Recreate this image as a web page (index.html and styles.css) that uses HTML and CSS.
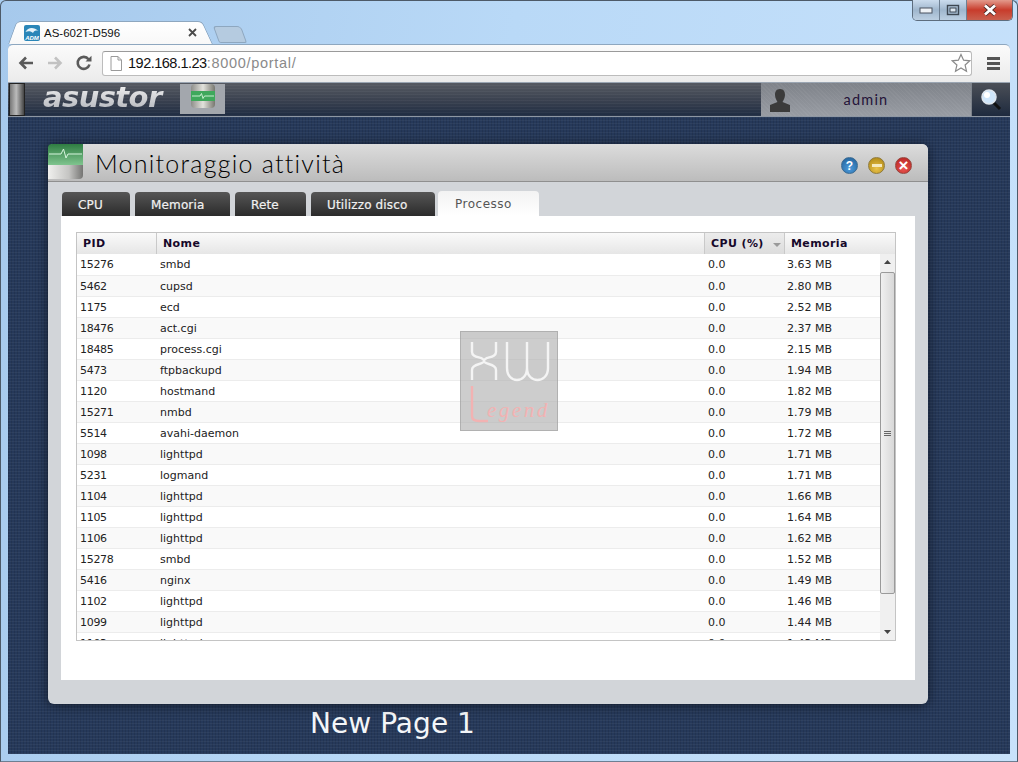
FILE: index.html
```html
<!DOCTYPE html>
<html lang="it">
<head>
<meta charset="utf-8">
<title>AS-602T-D596</title>
<link rel="stylesheet" href="styles.css">
</head>
<body>
<div class="frame">
  <div class="caps">
    <div class="cap cap-min"><svg width="14" height="8" viewBox="0 0 14 8"><rect x="1" y="2" width="12" height="5" fill="#eef2f6" stroke="#4a5360"/></svg></div>
    <div class="cap cap-max"><svg width="14" height="12" viewBox="0 0 14 12"><rect x="1.500" y="1.500" width="11" height="9" fill="none" stroke="#3d4752" stroke-width="1.400"/><rect x="4" y="4" width="6" height="4" fill="#dfe8f1" stroke="#3d4752"/></svg></div>
    <div class="cap cap-close"><svg width="16" height="12" viewBox="0 0 16 12"><path d="M3 1.500 L13 10.500 M13 1.500 L3 10.500" stroke="#4d2a28" stroke-width="4.400"/><path d="M3 1.500 L13 10.500 M13 1.500 L3 10.500" stroke="#fff" stroke-width="2.800"/></svg></div>
  </div>
  <div class="tabstrip">
    <div class="btab">
      <svg class="favicon" width="16" height="16" viewBox="0 0 16 16"><rect width="16" height="16" rx="2" fill="#2a86b8"/><path d="M1.500 7 C4 2 10 2 14.500 6 C11 5 10 6 9 8 C7 6 4 6 1.500 7Z" fill="#e6f3fa"/><text class="fav-text" x="8" y="14.500">ADM</text></svg>
      <span class="btab-title">AS-602T-D596</span>
      <svg class="btab-x" width="9" height="9" viewBox="0 0 9 9"><path d="M1 1 L8 8 M8 1 L1 8" stroke="#4a4a4a" stroke-width="1.800"/></svg>
    </div>
    <div class="newtab"></div>
  </div>
  <div class="toolbar">
    <svg class="tb-ic" width="18" height="16" viewBox="0 0 18 16"><path d="M16 8 H4 M9 2.500 L3.500 8 L9 13.500" fill="none" stroke="#5a5a5a" stroke-width="2.600"/></svg>
    <svg class="tb-ic" width="18" height="16" viewBox="0 0 18 16"><path d="M2 8 H14 M9 2.500 L14.500 8 L9 13.500" fill="none" stroke="#c2c2c2" stroke-width="2.600"/></svg>
    <svg class="tb-ic" width="18" height="16" viewBox="0 0 18 16"><path d="M14.500 9.500 A6 6 0 1 1 13.500 4.200" fill="none" stroke="#5a5a5a" stroke-width="2.600"/><path d="M10.500 6.600 H16.500 V0.800 Z" fill="#5a5a5a"/></svg>
    <div class="omnibox">
      <svg class="page-ic" width="12" height="15" viewBox="0 0 12 15"><path d="M1 .5 H8 L11.500 4 V14.500 H1Z M8 .5 V4 H11.500" fill="#fff" stroke="#9a9a9a"/></svg>
      <span class="url"><span class="url-host">192.168.1.23</span>:8000/portal/</span>
      <svg class="star" width="20" height="20" viewBox="0 0 20 20"><path d="M10 1.500 L12.600 7.200 L18.800 7.800 L14.100 12 L15.500 18.200 L10 15 L4.500 18.200 L5.900 12 L1.200 7.800 L7.400 7.200Z" fill="#fff" stroke="#8a8a8a" stroke-width="1.200"/></svg>
    </div>
    <div class="menu"><span></span><span></span><span></span></div>
  </div>
  <div class="page">
    <header class="appbar">
      <div class="handle"></div>
      <div class="logo">asustor</div>
      <div class="launch">
        <svg width="24" height="24" viewBox="0 0 24 24"><defs><linearGradient id="lg" x1="0" y1="0" x2="1" y2="0"><stop offset="0" stop-color="#8e8e8a"/><stop offset=".5" stop-color="#e2e2dc"/><stop offset="1" stop-color="#77776f"/></linearGradient></defs><rect width="24" height="24" rx="4" fill="url(#lg)"/><rect y="7" width="24" height="10" fill="#3fa85c"/><path d="M1 12 H9 L10.500 9.500 L12 14.500 L13.500 12 H23" stroke="#c8f0d0" fill="none"/></svg>
      </div>
      <div class="user">
        <svg class="avatar" width="24" height="24" viewBox="0 0 24 24"><path d="M12 1 C16 1 17 4 17 7 C17 10 15 13 14.500 14 L22 17 V24 H2 V17 L9.500 14 C9 13 7 10 7 7 C7 4 8 1 12 1Z" fill="#3b3b3b"/></svg>
        <span class="user-name">admin</span>
      </div>
      <div class="search">
        <svg width="22" height="24" viewBox="0 0 22 24"><path d="M13 14 L20 21" stroke="#111" stroke-width="3"/><circle cx="9" cy="9" r="7" fill="#cfe6fb" stroke="#dfe6ee" stroke-width="1.500"/><circle cx="7" cy="7" r="3" fill="#fff"/></svg>
      </div>
    </header>
    <main class="desktop">
      <section class="win">
        <div class="win-head">
          <svg class="win-icon" width="35" height="35" viewBox="0 0 35 35"><defs><linearGradient id="wg" x1="0" y1="0" x2="0" y2="1"><stop offset="0" stop-color="#2f7d42"/><stop offset="1" stop-color="#7fc48e"/></linearGradient><linearGradient id="wb" x1="0" y1="0" x2="1" y2="0"><stop offset="0" stop-color="#f0f0ee"/><stop offset=".6" stop-color="#c4c4c2"/><stop offset="1" stop-color="#757573"/></linearGradient></defs><path d="M0 4 Q0 0 4 0 H35 V21 H0Z" fill="url(#wg)"/><path d="M0 21 H35 V31 Q35 35 31 35 H0Z" fill="url(#wb)"/><path d="M1 10 H13 L15.500 5 L18 14 L20 10 H34" stroke="#d8f5de" fill="none"/></svg>
          <h1 class="win-title">Monitoraggio attività</h1>
          <div class="win-btns">
            <span class="dot dot-help">?</span>
            <span class="dot dot-min"><i class="bar"></i></span>
            <span class="dot dot-close">×</span>
          </div>
        </div>
        <nav class="tabs">
          <a class="tab tab-cpu">CPU</a>
          <a class="tab tab-mem">Memoria</a>
          <a class="tab tab-net">Rete</a>
          <a class="tab tab-disk">Utilizzo disco</a>
          <a class="tab tab-on">Processo</a>
        </nav>
        <div class="panel">
          <div class="grid">
            <div class="grid-head">
              <div class="th th-pid">PID</div>
              <div class="th th-name">Nome</div>
              <div class="th th-cpu">CPU (%)<i class="sort"></i></div>
              <div class="th th-mem">Memoria</div>
            </div>
            <div class="grid-body">
              <table class="rows">
                <tr><td class="c-pid">15276</td><td class="c-name">smbd</td><td class="c-cpu">0.0</td><td class="c-mem">3.63 MB</td></tr>
                <tr><td class="c-pid">5462</td><td class="c-name">cupsd</td><td class="c-cpu">0.0</td><td class="c-mem">2.80 MB</td></tr>
                <tr><td class="c-pid">1175</td><td class="c-name">ecd</td><td class="c-cpu">0.0</td><td class="c-mem">2.52 MB</td></tr>
                <tr><td class="c-pid">18476</td><td class="c-name">act.cgi</td><td class="c-cpu">0.0</td><td class="c-mem">2.37 MB</td></tr>
                <tr><td class="c-pid">18485</td><td class="c-name">process.cgi</td><td class="c-cpu">0.0</td><td class="c-mem">2.15 MB</td></tr>
                <tr><td class="c-pid">5473</td><td class="c-name">ftpbackupd</td><td class="c-cpu">0.0</td><td class="c-mem">1.94 MB</td></tr>
                <tr><td class="c-pid">1120</td><td class="c-name">hostmand</td><td class="c-cpu">0.0</td><td class="c-mem">1.82 MB</td></tr>
                <tr><td class="c-pid">15271</td><td class="c-name">nmbd</td><td class="c-cpu">0.0</td><td class="c-mem">1.79 MB</td></tr>
                <tr><td class="c-pid">5514</td><td class="c-name">avahi-daemon</td><td class="c-cpu">0.0</td><td class="c-mem">1.72 MB</td></tr>
                <tr><td class="c-pid">1098</td><td class="c-name">lighttpd</td><td class="c-cpu">0.0</td><td class="c-mem">1.71 MB</td></tr>
                <tr><td class="c-pid">5231</td><td class="c-name">logmand</td><td class="c-cpu">0.0</td><td class="c-mem">1.71 MB</td></tr>
                <tr><td class="c-pid">1104</td><td class="c-name">lighttpd</td><td class="c-cpu">0.0</td><td class="c-mem">1.66 MB</td></tr>
                <tr><td class="c-pid">1105</td><td class="c-name">lighttpd</td><td class="c-cpu">0.0</td><td class="c-mem">1.64 MB</td></tr>
                <tr><td class="c-pid">1106</td><td class="c-name">lighttpd</td><td class="c-cpu">0.0</td><td class="c-mem">1.62 MB</td></tr>
                <tr><td class="c-pid">15278</td><td class="c-name">smbd</td><td class="c-cpu">0.0</td><td class="c-mem">1.52 MB</td></tr>
                <tr><td class="c-pid">5416</td><td class="c-name">nginx</td><td class="c-cpu">0.0</td><td class="c-mem">1.49 MB</td></tr>
                <tr><td class="c-pid">1102</td><td class="c-name">lighttpd</td><td class="c-cpu">0.0</td><td class="c-mem">1.46 MB</td></tr>
                <tr><td class="c-pid">1099</td><td class="c-name">lighttpd</td><td class="c-cpu">0.0</td><td class="c-mem">1.44 MB</td></tr>
                <tr><td class="c-pid">1103</td><td class="c-name">lighttpd</td><td class="c-cpu">0.0</td><td class="c-mem">1.43 MB</td></tr>
              </table>
              <div class="scroll">
                <svg class="arrow" width="7" height="4" viewBox="0 0 7 4"><path d="M3.500 0 L7 4 H0Z" fill="#444"/></svg>
                <div class="thumb"><i></i><i></i><i></i></div>
                <svg class="arrow arrow-end" width="7" height="4" viewBox="0 0 7 4"><path d="M0 0 H7 L3.500 4Z" fill="#444"/></svg>
              </div>
            </div>
          </div>
        </div>
        <div class="watermark">
          <svg width="98" height="100" viewBox="0 0 98 100">
            <path d="M11 10 V20 C11 27 23 24 23 29 C23 24 35 27 35 20 V10 M11 48 V38 C11 31 23 33 23 29 C23 33 35 31 35 38 V48" fill="none" stroke="#f4f4f4" stroke-width="2.400"/>
            <path d="M46 10 V36 C46 52 66 52 66 36 V10 V36 C66 52 87 52 87 36 V10" fill="none" stroke="#f4f4f4" stroke-width="2.400"/>
            <path d="M11 54 V84 C11 88 14 89 18 89 H27" fill="none" stroke="#f2b2b2" stroke-width="2.400"/>
            <text class="wm-text" x="26" y="85">egend</text>
          </svg>
        </div>
      </section>
      <p class="caption">New Page 1</p>
    </main>
  </div>
</div>
</body>
</html>
```

FILE: styles.css
```css
* { box-sizing: border-box; }
html, body { margin: 0; padding: 0; }
body { width: 1018px; height: 762px; overflow: hidden; font-family: "DejaVu Sans", Verdana, sans-serif; background: #a9cdf0; }

.frame {
  position: relative;
  width: 1018px; height: 762px;
  display: flex; flex-direction: column;
  padding: 0 7px 7px 7px;
  background: linear-gradient(100deg, #a6c9ec 0%, #b9d9f7 45%, #c8e2fb 100%);
  border: 1px solid #4d5a68;
  border-radius: 6px 6px 0 0;
  border-bottom-color: #6d7f92;
}
.caps {
  position: absolute; top: -1px; right: 4px;
  display: flex; height: 21px;
  border: 1px solid #5d6d7e; border-top: 0;
  border-radius: 0 0 5px 5px; overflow: hidden;
}
.cap { display: flex; align-items: center; justify-content: center; height: 100%; }
.cap-min { width: 27px; background: linear-gradient(#cbdcee, #9fb6cd 50%, #bccfe2); border-right: 1px solid #6d7f92; }
.cap-max { width: 27px; background: linear-gradient(#cbdcee, #9fb6cd 50%, #bccfe2); border-right: 1px solid #6d7f92; }
.cap-close { width: 45px; background: linear-gradient(#e39a8c, #c83c2c 50%, #c9604f); }

.tabstrip { height: 43px; display: flex; align-items: flex-end; flex: none; }
.btab {
  position: relative;
  width: 205px; height: 23px;
  display: flex; align-items: center;
  padding: 0 16px 0 16px;
}
.btab::before, .btab::after {
  content: ""; position: absolute; top: 0; bottom: 0; width: 60%;
  background: linear-gradient(#fff, #f8f8f8);
  border-top: 1px solid #8ea7bf;
  transform-origin: bottom;
}
.btab::before { left: 0; border-left: 1px solid #8ea7bf; border-radius: 5px 0 0 0; transform-origin: bottom left; transform: skewX(-20deg); }
.btab::after { right: 0; border-right: 1px solid #8ea7bf; border-radius: 0 5px 0 0; transform-origin: bottom right; transform: skewX(25deg); }
.favicon, .btab-title, .btab-x { position: relative; z-index: 1; }
.favicon { flex: none; margin-right: 4px; }
.fav-text { font: italic bold 6px "Liberation Sans", Arial, sans-serif; fill: #fff; text-anchor: middle; }
.btab-title { font: 11.500px "Liberation Sans", Arial, sans-serif; color: #111; flex: 1; }
.btab-x { flex: none; }
.newtab {
  width: 28px; height: 17px; margin: 0 0 1px 3px;
  background: #b5cbe0; border: 1px solid #8ea7bf;
  border-radius: 3px 4px 2px 2px;
  transform: skewX(20deg);
}

.toolbar {
  height: 38px; flex: none;
  display: flex; align-items: center;
  padding: 0 8px 1px 9px;
  background: linear-gradient(#fbfbfb, #ebebeb);
  border-top: 1px solid #8ea7bf;
  border-radius: 5px 5px 0 0;
}
.tb-ic { flex: none; margin-right: 11px; }
.tb-ic:nth-child(3) { margin-right: 9px; }
.omnibox {
  width: 870px; height: 25px;
  display: flex; align-items: center;
  padding: 0 0 0 7px;
  background: #fff;
  border: 1px solid #bcbcbc; border-top-color: #9a9a9a;
  border-radius: 3px;
  flex: none;
}
.page-ic { flex: none; margin-right: 6px; }
.url { flex: 1; font: 14.500px "Liberation Sans", Arial, sans-serif; letter-spacing: .7px; color: #8a8a8a; }
.url-host { color: #111; letter-spacing: -.5px; }
.star { flex: none; }
.menu { margin-left: 15px; width: 13px; display: flex; flex-direction: column; gap: 2px; flex: none; }
.menu span { height: 3px; background: #555; }

.page { flex: 1; min-height: 0; display: flex; flex-direction: column; background: #24395a; border-top: 1px solid #9aa5b2; }
.appbar {
  height: 34px; flex: none;
  display: flex; align-items: stretch;
  background:
    repeating-linear-gradient(0deg, rgba(255,255,255,.04) 0 1px, transparent 1px 3px),
    linear-gradient(#565a62, #3b4250 50%, #1f2c42);
  border-bottom: 1px solid #8e97a3;
}
.handle { width: 16px; flex: none; margin-left: 1px; background: linear-gradient(90deg, #777, #bbb 45%, #444); border: 1px solid #222; }
.logo {
  flex: none; width: 137px; margin-left: 18px;
  font: italic bold 29px/29px "DejaVu Sans", Verdana, sans-serif;
  letter-spacing: -.6px;
  color: #c8cbd0;
  background: linear-gradient(#f4f4f4, #a8abb2);
  -webkit-background-clip: text; background-clip: text;
  -webkit-text-fill-color: transparent;
}
.launch {
  flex: none; width: 45px; height: 30px; margin: 1px 0 0 0;
  display: flex; align-items: flex-start; justify-content: center;
  background: #a3a7ad;
}
.user {
  flex: none; width: 210px; margin-left: auto;
  display: flex; align-items: center;
  padding: 0 0 0 7px;
  background:
    repeating-linear-gradient(45deg, rgba(255,255,255,.04) 0 1px, transparent 1px 3px),
    linear-gradient(#7f838a, #989ca3);
}
.avatar { flex: none; }
.user-name { flex: 1; text-align: center; font: 14.500px Lato, "Liberation Sans", sans-serif; letter-spacing: 1.200px; color: #241338; padding-right: 31px; }
.search { flex: none; width: 39px; display: flex; align-items: center; justify-content: center; background: linear-gradient(#4b4f57, #1e2a3e); border-left: 1px solid #7c828b; }

.desktop {
  flex: 1; min-height: 0;
  padding: 27px 0 0 40px;
  background-color: #26395a;
  background-image:
    repeating-linear-gradient(0deg, rgba(255,255,255,.045) 0 1px, transparent 1px 3px),
    repeating-linear-gradient(90deg, rgba(0,0,0,.10) 0 1px, transparent 1px 3px);
}
.win {
  position: relative;
  width: 880px; height: 560px;
  background: #d2d5d9;
  border-radius: 6px;
  box-shadow: 0 1px 12px rgba(0,0,0,.55);
}
.win-head {
  height: 38px;
  display: flex; align-items: flex-start;
  background: linear-gradient(#dcdcdc, #bcbcbc);
  border-bottom: 1px solid #8f8f8f;
  border-radius: 6px 6px 0 0;
}
.win-icon { flex: none; }
.win-title { margin: 3px 0 0 12px; font: 300 25px/32px Lato, "Liberation Sans", sans-serif; letter-spacing: 1.250px; color: #000; }
.win-btns { margin-left: auto; padding: 13px 16px 0 0; display: flex; gap: 10px; }
.dot {
  width: 17px; height: 17px; border-radius: 50%;
  display: flex; align-items: center; justify-content: center;
  color: #fff; font: bold 12px/1 "Liberation Sans", sans-serif;
}
.dot-help { background: radial-gradient(circle at 50% 70%, #4c9bdc, #1f5d95); border: 1px solid #3a6a92; }
.dot-min { background: radial-gradient(circle at 50% 70%, #eac24a, #a9820f); border: 1px solid #8f7a3c; }
.dot-close { background: radial-gradient(circle at 50% 70%, #ea5550, #b31e1c); border: 1px solid #96453e; font-size: 17px; }
.bar { width: 10px; height: 3px; background: #f5e9bf; }

.tabs { height: 34px; display: flex; align-items: flex-end; padding-left: 14px; gap: 5px; }
.tab {
  height: 24px;
  display: flex; align-items: center;
  padding: 1px 0 0 16px;
  font-size: 12px; letter-spacing: .15px; color: #f1f1f1;
  -webkit-text-stroke: .2px #f1f1f1;
  background: linear-gradient(#565656, #2b2b2b);
  border-radius: 4px 4px 0 0;
}
.tab-cpu { width: 68px; }
.tab-mem { width: 95px; }
.tab-net { width: 71px; }
.tab-disk { width: 124px; }
.tab-on { width: 101px; height: 25px; margin-left: -2px; padding-left: 17px; letter-spacing: .5px; -webkit-text-stroke: 0; background: linear-gradient(#f3f3f3, #fff); color: #555; }

.panel {
  height: 464px; margin: 0 13px;
  background: #fff;
  padding: 16px 0 0 15px;
}
.grid { width: 820px; height: 409px; border: 1px solid #c4c4c4; display: flex; flex-direction: column; }
.grid-head { height: 21px; flex: none; display: flex; background: linear-gradient(#fafafa, #e6e6e6); }
.th { display: flex; align-items: center; font: bold 11px "DejaVu Sans", Verdana, sans-serif; letter-spacing: .4px; color: #16082a; padding-left: 6px; border-right: 1px solid #c9c9c9; }
.th-pid { width: 80px; }
.th-name { width: 548px; }
.th-cpu { width: 80px; position: relative; background: linear-gradient(#ececec, #dcdcdc); }
.th-mem { flex: 1; border-right: 0; }
.sort { position: absolute; right: 3px; top: 10px; border: 4px solid transparent; border-top: 4px solid #9a9a9a; border-bottom: 0; }

.grid-body { flex: 1; min-height: 0; display: flex; overflow: hidden; }
.rows { width: 803px; border-collapse: collapse; table-layout: fixed; font: 11px "DejaVu Sans", Verdana, sans-serif; color: #222; flex: none; align-self: flex-start; }
.rows tr { height: 21px; border-bottom: 1px solid #ececec; }
.rows tr:nth-child(even) { background: #f9f9f9; }
.rows td { padding: 1px 0 0 3px; white-space: nowrap; }
.c-pid { width: 80px; letter-spacing: -.3px; }
.c-name { width: 548px; }
.c-cpu { width: 80px; }
.rows .c-mem { padding-left: 2px; }

.scroll { flex: none; width: 15px; display: flex; flex-direction: column; align-items: center; background: #f0f0f0; }
.arrow { flex: none; margin: 6px 0 8px; }
.arrow-end { margin: auto 0 6px; }
.thumb {
  width: 15px; height: 322px; flex: none;
  display: flex; flex-direction: column; align-items: center; justify-content: center; gap: 1px;
  background: linear-gradient(90deg, #f0f0f0, #d8d8d8);
  border: 1px solid #9a9a9a; border-radius: 2px;
}
.thumb i { width: 7px; height: 1px; background: #666; }

.watermark {
  position: absolute; left: 412px; top: 187px;
  width: 98px; height: 100px;
  background: rgba(175,175,175,.62);
  border: 1px solid rgba(150,150,150,.5);
}
.wm-text { font: italic 21px "Liberation Serif", serif; letter-spacing: 2.500px; fill: #f2b2b2; }

.caption { margin: 5px 0 0 262px; font: 28px/30px "DejaVu Sans", Verdana, sans-serif; letter-spacing: .05px; color: #f4f6f8; }
```
